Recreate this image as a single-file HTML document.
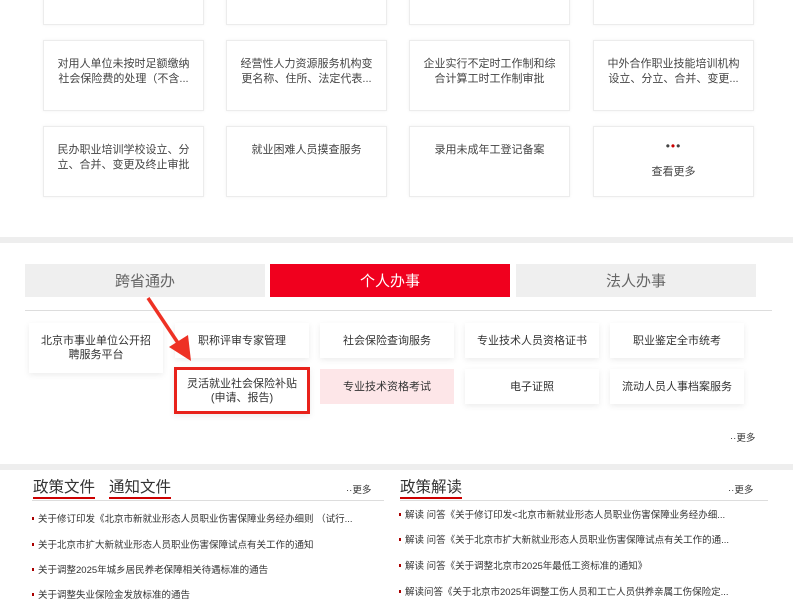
<!DOCTYPE html>
<html><head><meta charset="utf-8"><style>
*{margin:0;padding:0;box-sizing:border-box}
body{width:793px;height:604px;position:relative;background:#fff;font-family:"Liberation Sans","Noto Sans CJK SC",sans-serif;overflow:hidden;color:#333}
.a{position:absolute}
.c{position:absolute;background:#fff;border:1px solid #ececec;box-shadow:0 0 3px rgba(0,0,0,.06);font-size:11px;line-height:15px;color:#444;text-align:center;padding:16px 13px 0}
.c span.x{display:-webkit-box;-webkit-line-clamp:2;-webkit-box-orient:vertical;overflow:hidden}
.s{position:absolute;background:#fff;box-shadow:0 2px 6px rgba(0,0,0,.08);font-size:11px;line-height:14px;color:#333;display:flex;align-items:center;justify-content:center;text-align:center;padding:0 8px}
.t{position:absolute;top:264px;height:33px;width:240px;font-size:15px;display:flex;align-items:center;justify-content:center;background:#efefef;color:#666}
.li{position:absolute;font-size:9.5px;color:#333;white-space:nowrap}
.li:before{content:"";position:absolute;left:-6px;top:6px;width:2px;height:3px;background:#a00}
.h{position:absolute;font-size:15.5px;color:#333;top:479px;border-bottom:2px solid #c00;line-height:17px;padding-bottom:1px}
</style></head><body>
<div class="c" style="left:43px;top:-10px;width:161px;height:35px"></div>
<div class="c" style="left:226px;top:-10px;width:161px;height:35px"></div>
<div class="c" style="left:409px;top:-10px;width:161px;height:35px"></div>
<div class="c" style="left:593px;top:-10px;width:161px;height:35px"></div>

<div class="c" style="left:43px;top:40px;width:161px;height:71px"><span class="x">对用人单位未按时足额缴纳社会保险费的处理（不含...</span></div>
<div class="c" style="left:226px;top:40px;width:161px;height:71px"><span class="x">经营性人力资源服务机构变更名称、住所、法定代表...</span></div>
<div class="c" style="left:409px;top:40px;width:161px;height:71px"><span class="x">企业实行不定时工作制和综合计算工时工作制审批</span></div>
<div class="c" style="left:593px;top:40px;width:161px;height:71px"><span class="x">中外合作职业技能培训机构设立、分立、合并、变更...</span></div>

<div class="c" style="left:43px;top:126px;width:161px;height:71px"><span class="x">民办职业培训学校设立、分立、合并、变更及终止审批</span></div>
<div class="c" style="left:226px;top:126px;width:161px;height:71px">就业困难人员摸查服务</div>
<div class="c" style="left:409px;top:126px;width:161px;height:71px">录用未成年工登记备案</div>
<div class="c" style="left:593px;top:126px;width:161px;height:71px;padding-top:12px"><span style="font-size:12px;letter-spacing:1px;color:#444">•<span style="color:#c00">•</span>•</span><br><span style="display:block;margin-top:10px">查看更多</span></div>

<div class="a" style="left:0;top:237px;width:793px;height:6px;background:#eee"></div>
<div class="t" style="left:25px">跨省通办</div>
<div class="t" style="left:270px;background:#f0001e;color:#fff">个人办事</div>
<div class="t" style="left:516px">法人办事</div>
<div class="a" style="left:25px;top:310px;width:747px;height:1px;background:#ddd"></div>

<div class="s" style="left:29px;top:323px;width:134px;height:50px">北京市事业单位公开招聘服务平台</div>
<div class="s" style="left:175px;top:323px;width:134px;height:35px">职称评审专家管理</div>
<div class="s" style="left:320px;top:323px;width:134px;height:35px">社会保险查询服务</div>
<div class="s" style="left:465px;top:323px;width:134px;height:35px">专业技术人员资格证书</div>
<div class="s" style="left:610px;top:323px;width:134px;height:35px">职业鉴定全市统考</div>
<div class="s" style="left:174px;top:367px;width:136px;height:47px;border:3px solid #e8221b">灵活就业社会保险补贴<br>(申请、报告)</div>
<div class="s" style="left:320px;top:369px;width:134px;height:35px;background:#fde6e8;box-shadow:none">专业技术资格考试</div>
<div class="s" style="left:465px;top:369px;width:134px;height:35px">电子证照</div>
<div class="s" style="left:610px;top:369px;width:134px;height:35px">流动人员人事档案服务</div>
<svg class="a" style="left:140px;top:290px" width="60" height="75"><line x1="8" y1="8" x2="40" y2="56" stroke="#ee3124" stroke-width="3.5"/><polygon points="29,57 51,71 48,45" fill="#ee3124"/></svg>
<div class="a" style="left:730px;top:430px;font-size:9.5px;color:#333">··更多</div>

<div class="a" style="left:0;top:464px;width:793px;height:6px;background:#eee"></div>
<div class="a" style="left:32px;top:500px;width:352px;height:1px;background:#ddd"></div>
<div class="a" style="left:400px;top:500px;width:368px;height:1px;background:#ddd"></div>
<div class="h" style="left:33px">政策文件</div>
<div class="h" style="left:109px">通知文件</div>
<div class="h" style="left:400px">政策解读</div>
<div class="a" style="left:346px;top:482px;font-size:9.5px">··更多</div>
<div class="a" style="left:728px;top:482px;font-size:9.5px">··更多</div>
<div class="li" style="left:38px;top:511px">关于修订印发《北京市新就业形态人员职业伤害保障业务经办细则 （试行...</div>
<div class="li" style="left:38px;top:537px">关于北京市扩大新就业形态人员职业伤害保障试点有关工作的通知</div>
<div class="li" style="left:38px;top:562px">关于调整2025年城乡居民养老保障相关待遇标准的通告</div>
<div class="li" style="left:38px;top:587px">关于调整失业保险金发放标准的通告</div>
<div class="li" style="left:405px;top:507px">解读 问答《关于修订印发&lt;北京市新就业形态人员职业伤害保障业务经办细...</div>
<div class="li" style="left:405px;top:532px">解读 问答《关于北京市扩大新就业形态人员职业伤害保障试点有关工作的通...</div>
<div class="li" style="left:405px;top:558px">解读 问答《关于调整北京市2025年最低工资标准的通知》</div>
<div class="li" style="left:405px;top:584px">解读问答《关于北京市2025年调整工伤人员和工亡人员供养亲属工伤保险定...</div>
</body></html>
